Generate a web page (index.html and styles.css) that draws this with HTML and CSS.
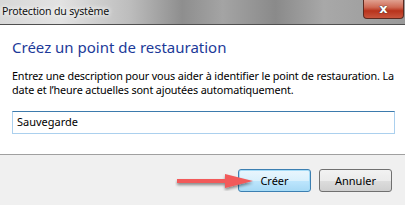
FILE: index.html
```html
<!DOCTYPE html>
<html lang="fr">
<head>
<meta charset="utf-8">
<link rel="stylesheet" href="styles.css">
</head>
<body>
<div class="window">
  <div class="titlebar">
    <span class="title">Protection du système</span>
    <div class="close"><span>x</span></div>
  </div>
  <div class="content">
    <h1 class="heading">Créez un point de restauration</h1>
    <p class="desc">Entrez une description pour vous aider à identifier le point de restauration. La<br>date et l’heure actuelles sont ajoutées automatiquement.</p>
    <div class="field">Sauvegarde</div>
  </div>
  <div class="footer">
    <div class="buttons">
      <button class="btn primary">Créer</button>
      <button class="btn">Annuler</button>
    </div>
    <div class="arrow">
      <svg width="80" height="20" viewBox="0 0 80 20">
        <defs>
          <filter id="sh" x="-20%" y="-50%" width="140%" height="200%">
            <feGaussianBlur in="SourceAlpha" stdDeviation="1.5"/>
            <feOffset dx="0" dy="2"/>
            <feComponentTransfer><feFuncA type="linear" slope="0.45"/></feComponentTransfer>
            <feMerge><feMergeNode/><feMergeNode in="SourceGraphic"/></feMerge>
          </filter>
        </defs>
        <g filter="url(#sh)">
          <rect x="2" y="8" width="52" height="4" fill="#f25a5a"/>
          <path d="M50 3 L78 10 L50 17 Z" fill="#f25a5a"/>
        </g>
      </svg>
    </div>
  </div>
</div>
</body>
</html>
```
FILE: styles.css
```css
* { box-sizing: border-box; }
html, body { margin: 0; padding: 0; }
body {
  width: 405px;
  height: 205px;
  overflow: hidden;
  font-family: "Noto Sans", "DejaVu Sans", sans-serif;
  background: #f0f0f0;
}
.window { width: 405px; height: 205px; display: flex; flex-direction: column; }
.titlebar {
  height: 25px;
  display: flex;
  align-items: flex-start;
  justify-content: space-between;
  background: linear-gradient(90deg, #d8d8d8 0%, #e2e2e2 15%, #bdbdbd 32%, #8e8e8e 45%, #a4a4a4 55%, #8a8a8a 68%, #a8a8a8 80%, #9a9a9a 100%);
  border-bottom: 1px solid #505050;
  position: relative;
}
.title {
  font-size: 10.6px;
  letter-spacing: -0.2px;
  color: #111;
  padding: 4px 0 0 2px;
  text-shadow: 0 0 6px #fff, 0 0 4px #fff;
}
.close {
  width: 41px;
  height: 19px;
  margin-right: 1px;
  border: 1px solid #5c2a20;
  border-top: none;
  border-radius: 0 0 4px 4px;
  background: linear-gradient(180deg, #e0a090 0%, #cf6a55 40%, #b8331c 60%, #c8543c 100%);
  display: flex;
  align-items: center;
  justify-content: center;
}
.close span {
  font-family: "DejaVu Sans", sans-serif;
  font-weight: bold;
  font-size: 13px;
  color: #fff;
  line-height: 1;
  margin-top: -2px;
  text-shadow: 0 0 1px #333, 0 0 1px #333;
}
.content {
  background: #fff;
  height: 130px;
  padding: 12px 8px 0 12px;
  border-bottom: 1px solid #a0a0a0;
}
.heading {
  margin: 0;
  font-weight: normal;
  font-size: 15px;
  line-height: 20px;
  color: #1c3a99;
}
.desc {
  margin: 12px 0 0 0;
  font-size: 10.8px;
  letter-spacing: -0.14px;
  line-height: 14px;
  color: #000;
  white-space: nowrap;
}
.field {
  margin-top: 14px;
  height: 23px;
  width: 383px;
  border: 1px solid #abd0ee;
  border-top-color: #3d7bad;
  font-size: 11px;
  line-height: 20px;
  padding-left: 4px;
  color: #000;
}
.footer {
  flex: 1;
  background: #f0f0f0;
  position: relative;
  padding: 14px 13px 0 0;
}
.buttons { display: flex; justify-content: flex-end; gap: 8px; }
.btn {
  width: 73px;
  height: 23px;
  font-family: inherit;
  font-size: 11px;
  color: #000;
  border: 1px solid #707070;
  border-radius: 3px;
  background: linear-gradient(180deg, #f2f2f2 0%, #ebebeb 50%, #dddddd 51%, #cfcfcf 100%);
  padding: 0;
}
.btn.primary {
  border-color: #3c7fb1;
  box-shadow: inset 0 0 0 1px #a6dcf7;
  background: linear-gradient(180deg, #eaf6fd 0%, #d9f0fc 50%, #bee6fd 51%, #a7d9f5 100%);
}
.arrow {
  position: absolute;
  left: 175px;
  top: 16px;
  line-height: 0;
}
```
